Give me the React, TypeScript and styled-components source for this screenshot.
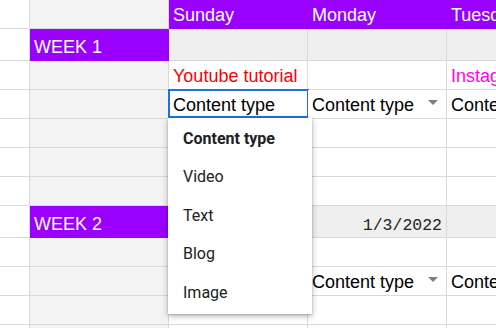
import React from 'react';
import styled, { createGlobalStyle } from 'styled-components';

const GlobalStyle = createGlobalStyle`
  html, body {
    margin: 0;
    padding: 0;
    background: #ffffff;
    overflow: hidden;
  }
`;

const PURPLE = '#9900ff';
const LINE = '#dadada';

const Viewport = styled.div`
  width: 496px;
  height: 328px;
  overflow: hidden;
`;

const Sheet = styled.div`
  display: grid;
  grid-template-columns: 30px 139px 139px 139px 139px;
  grid-template-rows: 29px 32px 29px 29px 29px 29px 29px 32px 29px 29px 29px 29px;
  width: 586px;
  font-family: Arial, 'Liberation Sans', sans-serif;
  font-size: 18px;
  color: #000000;
`;

const Cell = styled.div<{ $bg?: string; $color?: string; $line?: string; $right?: boolean; $mono?: boolean }>`
  position: relative;
  box-sizing: border-box;
  display: flex;
  align-items: flex-end;
  justify-content: ${(p) => (p.$right ? 'flex-end' : 'flex-start')};
  padding: 0 4px 2px 4px;
  background: ${(p) => p.$bg || '#ffffff'};
  color: ${(p) => p.$color || '#000000'};
  border-right: 1px solid ${(p) => p.$line || LINE};
  border-bottom: 1px solid ${(p) => p.$line || LINE};
  white-space: nowrap;
  overflow: ${(p) => (p.$right ? 'hidden' : 'visible')};
  font-family: ${(p) => (p.$mono ? "'Liberation Mono', 'DejaVu Sans Mono', monospace" : 'inherit')};
  font-size: ${(p) => (p.$mono ? '16.5px' : 'inherit')};
`;

const Chip = styled.span`
  flex: 1;
  display: flex;
  align-items: center;
  justify-content: space-between;
  padding-right: 4px;
`;

const Caret = styled.span`
  width: 0;
  height: 0;
  border-left: 5px solid transparent;
  border-right: 5px solid transparent;
  border-top: 5px solid #808080;
  margin-bottom: 6px;
`;

const Selection = styled.div`
  position: absolute;
  top: -1px;
  left: -1px;
  right: -2px;
  bottom: 0;
  border: 2px solid #1a73e8;
  pointer-events: none;
`;

const Menu = styled.div`
  position: absolute;
  top: 100%;
  left: -1px;
  width: 144px;
  padding: 1px 0 2px;
  background: #ffffff;
  box-shadow: 0 2px 6px rgba(0, 0, 0, 0.3), 0 1px 2px rgba(0, 0, 0, 0.15);
  z-index: 5;
  font-family: Roboto, 'Noto Sans', sans-serif;
  font-size: 16px;
`;

const MenuItem = styled.div<{ $bold?: boolean }>`
  height: 38.5px;
  display: flex;
  align-items: center;
  padding-left: 15px;
  color: #202124;
  font-weight: ${(p) => (p.$bold ? 700 : 400)};
`;

const GREY = '#f3f3f3';
const BAND = '#efefef';

type C = { text?: string; bg?: string; color?: string; line?: string; chip?: boolean; right?: boolean; mono?: boolean; editing?: boolean };

const header = (t: string): C => ({ text: t, bg: PURPLE, color: '#ffffff', line: '#9200f2' });
const week = (t: string): C => ({ text: t, bg: PURPLE, color: '#ffffff', line: PURPLE });
const side: C = { bg: GREY };
const blank: C = {};

const rows: C[][] = [
  [blank, side, header('Sunday'), header('Monday'), header('Tuesday')],
  [blank, week('WEEK 1'), { bg: BAND }, { bg: BAND }, { bg: BAND }],
  [blank, side, { text: 'Youtube tutorial', color: '#ff0000' }, blank, { text: 'Instagram', color: '#ff00ff' }],
  [blank, side, { text: 'Content type', editing: true }, { text: 'Content type', chip: true }, { text: 'Content type', chip: true }],
  [blank, side, blank, blank, blank],
  [blank, side, blank, blank, blank],
  [blank, side, blank, blank, blank],
  [blank, week('WEEK 2'), { bg: BAND }, { bg: BAND, text: '1/3/2022', right: true, mono: true, color: '#222222' }, { bg: BAND }],
  [blank, side, blank, blank, blank],
  [blank, side, blank, { text: 'Content type', chip: true }, { text: 'Content type', chip: true }],
  [blank, side, blank, blank, blank],
  [blank, side, blank, blank, blank],
];

const menuItems = ['Content type', 'Video', 'Text', 'Blog', 'Image'];

export default function App() {
  return (
    <>
      <GlobalStyle />
      <Viewport>
        <Sheet>
          {rows.map((row, r) =>
            row.map((c, i) => (
              <Cell key={`${r}-${i}`} $bg={c.bg} $color={c.color} $line={c.line} $right={c.right} $mono={c.mono}>
                {c.chip ? (
                  <Chip>
                    {c.text}
                    <Caret />
                  </Chip>
                ) : (
                  c.text
                )}
                {c.editing && (
                  <>
                    <Selection />
                    <Menu>
                      {menuItems.map((m, k) => (
                        <MenuItem key={m} $bold={k === 0}>
                          {m}
                        </MenuItem>
                      ))}
                    </Menu>
                  </>
                )}
              </Cell>
            ))
          )}
        </Sheet>
      </Viewport>
    </>
  );
}
